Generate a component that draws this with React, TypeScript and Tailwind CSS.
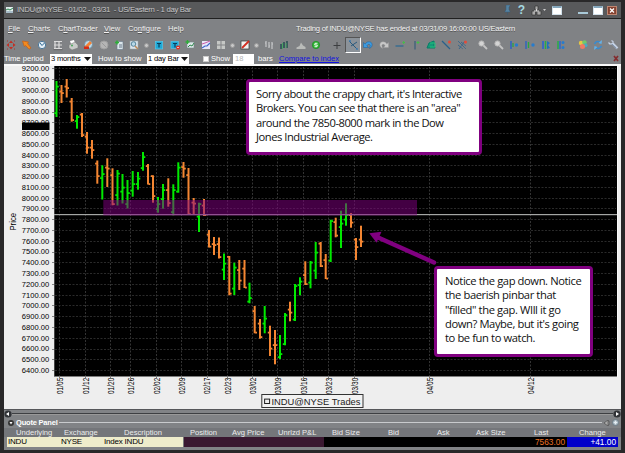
import React from 'react';

type Bar = [number, number, number, 'g' | 'o', number, number];

// x, high, low, colour, open, close
const BARS: Bar[] = [
  [56.5, 81, 117, 'g', 113, 86.5], [61.5, 85, 103, 'o', 91.5, 93], [66.7, 79, 97.5, 'o', 86.5, 88], [71.7, 98, 121.7, 'o', 101.5, 120],
  [77, 115, 128.7, 'g', 121, 117], [82, 113, 137, 'o', 114.5, 135], [87, 132, 153.7, 'o', 136.5, 147.5], [92, 140, 158.7, 'o', 147.5, 150],
  [97.3, 160.5, 183.7, 'o', 163.5, 176], [102.3, 165.3, 199.5, 'g', 178, 174], [107.3, 158.3, 187, 'o', 167.5, 168.5], [112.5, 168.3, 205.3, 'o', 175, 204],
  [117.5, 170, 205.5, 'g', 195, 173.5], [122.5, 174, 203.5, 'g', 191.5, 187.5], [127.5, 180, 208.5, 'g', 204, 193], [132.7, 171, 196.7, 'g', 190.5, 184],
  [138, 172, 189.7, 'g', 184, 178.5], [143, 152, 170.7, 'g', 168, 157], [148, 164, 184.5, 'o', 166, 184], [153, 175.3, 202.7, 'o', 176, 196],
  [158, 197, 212.7, 'g', 209, 204], [163, 184, 208.7, 'g', 199, 190], [168.3, 178.3, 206.7, 'o', 190, 203], [173.3, 184.3, 215.3, 'g', 212, 190],
  [178.3, 162.3, 192.7, 'g', 191.5, 167.5], [183.5, 162, 177.7, 'o', 167, 168.5], [188.5, 168, 215, 'o', 175, 214], [193.7, 198, 215, 'o', 202.5, 203.5],
  [199, 202.7, 232, 'g', 216.5, 204], [204, 199, 216, 'o', 205.5, 215], [209, 230, 247.5, 'o', 234.5, 246.5], [214, 237, 255, 'o', 244, 245],
  [219, 237.5, 258.5, 'o', 244, 257], [224, 253.5, 280, 'g', 269.5, 263.5], [229.3, 256, 295.3, 'o', 256.7, 293.5], [234.3, 262.7, 295, 'g', 288.5, 267.5],
  [239.3, 260, 290, 'o', 270, 280.5], [244.5, 260, 288, 'o', 268.5, 287.5], [249.5, 282.7, 303.3, 'g', 301.5, 298], [254.7, 306, 333.3, 'o', 311, 332.5],
  [260, 319, 338.7, 'o', 323.5, 337], [264.7, 306, 333.3, 'g', 323.5, 318.5], [270, 325.7, 356, 'o', 332.5, 348.5], [275, 330, 364.3, 'o', 345, 345],
  [280, 335, 359, 'g', 357, 354], [285, 313, 345.3, 'g', 344, 315], [290, 301.7, 321.3, 'o', 309.5, 312.5], [295, 284, 321, 'g', 319.5, 286],
  [300, 277.3, 295.3, 'g', 285, 281.5], [305.3, 261.3, 285, 'o', 275, 284], [310.5, 261, 288.3, 'g', 282.5, 262.5], [315.7, 242, 279, 'g', 270.5, 252.5],
  [320.7, 242, 267, 'o', 243.5, 266], [325.7, 254, 279, 'o', 260, 278.5], [330.7, 219.7, 262, 'g', 260.5, 221], [335.7, 217.7, 237.3, 'o', 222, 235.5],
  [341, 210.7, 248, 'g', 227, 223.5], [346, 203.3, 225.7, 'g', 219.5, 215], [351, 213, 227.7, 'o', 215, 222.5], [356, 238, 260, 'o', 239.5, 247],
  [361, 225.7, 247, 'o', 239.5, 241.5],
];

const DATES: [number, string][] = [
  [59.5, '01/05'], [85.5, '01/12'], [110.5, '01/20'], [130.5, '01/26'], [156.5, '02/02'], [181.5, '02/09'], [207, '02/17'], [227.5, '02/23'],
  [252.5, '03/02'], [277.5, '03/09'], [303.5, '03/16'], [328.5, '03/23'], [354.5, '03/30'], [429.5, '04/05'], [530.5, '04/12'],
];

const PRICES = Array.from({ length: 29 }, (_, i) => 9200 - i * 100);
const priceY = (p: number) => 68.4 + (9200 - p) * 0.10775;
const colors = { g: '#00ea00', o: '#f48632' };

function Chart() {
  return (
    <svg width="617" height="345" viewBox="4 64 617 345" className="block" fontFamily="'Liberation Sans', Arial, sans-serif">
      <rect x="4" y="64" width="617" height="345" fill="#eeeeee" />
      <rect x="4" y="64" width="617" height="2" fill="#f8f8f8" />
      <rect x="54" y="66" width="564" height="311" fill="#fafafa" />
      <rect x="54" y="66" width="563" height="310.5" fill="#000" />
      <rect x="54" y="66" width="1" height="310" fill="#444" />
      {PRICES.map((p) => (
        <g key={p}>
          <line x1="55" x2="616" y1={Math.round(priceY(p)) + 0.5} y2={Math.round(priceY(p)) + 0.5} stroke="#2a2a2a" strokeDasharray="2 1.5" />
          <line x1="52" x2="54" y1={Math.round(priceY(p)) + 0.5} y2={Math.round(priceY(p)) + 0.5} stroke="#888" />
          <text x="21.8" y={priceY(p) + 2.9} fontSize="7.6" textLength="27.4" lengthAdjust="spacingAndGlyphs" fill="#000">{p}.00</text>
        </g>
      ))}
      {DATES.map(([x, d]) => (
        <g key={d}>
          <line x1={Math.floor(x) + 0.5} x2={Math.floor(x) + 0.5} y1="67" y2="376" stroke="#333" strokeDasharray="2 1.5" />
          <line x1={Math.floor(x) + 0.5} x2={Math.floor(x) + 0.5} y1="376" y2="378" stroke="#777" />
          <text transform={`translate(${x + 3.2} 394) rotate(-90)`} fontSize="8.8" textLength="16.3" lengthAdjust="spacingAndGlyphs" fill="#000">{d}</text>
        </g>
      ))}
      <rect x="22" y="122.5" width="27.5" height="7.5" fill="#000" />
      <text transform="translate(16 230.5) rotate(-90)" fontSize="8.4" textLength="17.5" lengthAdjust="spacingAndGlyphs" fill="#000">Price</text>
      {BARS.map(([x, hi, lo, c, o, cl]) => (
        <g key={x} fill={colors[c]}>
          <rect x={x - 1} y={hi} width="2" height={lo - hi} />
          <rect x={x - 2.2} y={o - 0.8} width="1.8" height="1.8" />
          <rect x={x + 0.5} y={cl - 0.8} width="1.8" height="1.8" />
        </g>
      ))}
      <rect x="54" y="214" width="563" height="1.2" fill="#a4a6a4" />
      <rect x="103.3" y="200" width="313.7" height="15.5" fill="#800080" fillOpacity=".52" />
      <path d="M434 262.5 L377 237" stroke="#800080" strokeWidth="4.4" strokeLinecap="round" />
      <path d="M369.3 233.3 L381.5 231.8 L376.5 242.8 Z" fill="#800080" />
      <rect x="261.8" y="394.5" width="101.2" height="13" fill="#f2f2f2" stroke="#333" />
      <rect x="264.6" y="399.1" width="5" height="4.4" fill="#eee" stroke="#222" />
      <text x="271.5" y="404.6" fontSize="8.2" textLength="89" lengthAdjust="spacingAndGlyphs" fill="#222">INDU@NYSE Trades</text>
    </svg>
  );
}

const Svg = ({ children }: { children: React.ReactNode }) => (
  <svg width="14" height="14" viewBox="0 0 14 14" fill="none" className="block shrink-0">{children}</svg>
);
const Dot = () => (
  <span className="flex w-2 shrink-0 justify-center"><span className="size-[5px] rounded-full border border-[#9a9a9a] bg-[#c8c8c8]" /></span>
);

const Move = () => <Svg><path d="M7 2.5 9 5H5ZM7 11.5 9 9H5ZM2.5 7 5 5v4ZM11.500 7 9 5v4Z" fill="#c42d22" /><path d="M3 3h1M10 3h1M3 11h1M10 11h1" stroke="#a33" /><circle cx="7" cy="7" r="1" fill="#808285" /></Svg>;
const Arrow = () => <Svg><path d="M2.500 3 8.500 4 7.600 5.600 11 10 9 11.200 5.600 7.600 4.300 8.500Z" fill="#f28a20" stroke="#c95f12" strokeWidth=".7" /></Svg>;
const Clock = () => <Svg><circle cx="7" cy="7" r="3.700" fill="#e4eef5" stroke="#4a7799" /><path d="m5 5 2 2.500L9.500 5" stroke="#2a6490" /></Svg>;
const Grid = () => <Svg><path d="M3 3.500h8M3 7h8M3 10.500h8M4 3v8M8 3v8" stroke="#dcdcdc" strokeWidth="1.200" /><path d="M2.500 11.700h9" stroke="#555" strokeWidth=".6" /></Svg>;
const Print = () => <Svg><path d="m4 3 4-1 1 3-4 1Z" fill="#fff" /><path d="m3 7 6-3 3 3v3l-6 2-3-2Z" fill="#c8cbc8" stroke="#777" strokeWidth=".5" /><circle cx="6" cy="7.500" r="1" fill="#4aa55a" /></Svg>;
const Edit = () => <Svg><circle cx="7.500" cy="6.500" r="4" fill="#bcd8e8" stroke="#5b8499" strokeWidth=".7" /><path d="m4 8 5-5 2 2-5 5Z" fill="#f38234" /><path d="M3 8.500h5v2.500H3Z" fill="#d52b14" /></Svg>;
const Disk = () => <Svg><circle cx="7" cy="7" r="4" fill="#b5b5b5" stroke="#a0a0a0" /><path d="m5 5 4 4" stroke="#999" /></Svg>;
const AddPage = () => <Svg><path d="M5 3.500h6v8H5z" fill="#dce7ec" stroke="#678" strokeWidth=".6" /><path d="M3 4.500h4M5 2.500v4" stroke="#2daf38" strokeWidth="1.500" /><path d="M7 7h3M7 9h3" stroke="#678" /></Svg>;
const Search = () => <Svg><rect x="3" y="3" width="8" height="8" fill="#dbe5ec" stroke="#9aa" strokeWidth=".5" /><circle cx="6.500" cy="6" r="2.300" fill="#b8d9e8" stroke="#53849c" /><path d="m8 8 3 3" stroke="#bc8a58" strokeWidth="1.500" /></Svg>;
const TextIcon = () => <Svg><rect x="3.300" y="3.300" width="7.400" height="7.700" fill="#20a8d5" stroke="#57cced" strokeWidth=".6" /><path d="M5 5.500h4M7 5.500v4" stroke="#083e5c" strokeWidth="1.200" /></Svg>;
const TextDel = () => <Svg><rect x="3" y="3.300" width="7.400" height="7" fill="#20a8d5" stroke="#57cced" strokeWidth=".6" /><path d="M5 5.500h4M7 5.500v4" stroke="#083e5c" strokeWidth="1.200" /><circle cx="10" cy="9.500" r="2" fill="#e12c20" /><path d="M9 9.500h2" stroke="#fff" strokeWidth=".7" /></Svg>;
const ChartAdd = () => <Svg><path d="M4 4h7v6H4z" fill="#dde7ea" stroke="#788" strokeWidth=".6" /><path d="m5 9 2-2 2 1 2-3" stroke="#2d884a" /><path d="M2.500 4h4M4.500 2v4" stroke="#2daf38" strokeWidth="1.400" /></Svg>;
const Lines = () => <Svg><rect x="3" y="3" width="8" height="8" fill="#e8e8f8" /><path d="m3 6 3-1 5-2" stroke="#cc5da8" /><path d="m3 10 3-2 2 0 3-3" stroke="#4168cb" strokeWidth="1.200" /></Svg>;
const Tiles = () => <Svg><path d="M3 3h3.500v3.500H3zM7.500 3H11v3.500H7.500zM3 7.500h3.500V11H3zM7.500 7.500H11V11H7.500z" fill="#c5c7c5" /></Svg>;
const Draw = () => <Svg><rect x="3" y="3" width="8" height="8" fill="#f2f2ef" stroke="#333" strokeWidth=".7" /><path d="m4 10 7-7" stroke="#d22d20" strokeWidth="1.800" /></Svg>;
const Candles = () => <Svg><path d="M4 3v6M7 4v6M10 4v7M3 5h1M7 8h1M10 6h1" stroke="#c6c8ca" strokeWidth="1.200" /></Svg>;
const Volume = () => <Svg><path d="M4 6v5M7 4v6M10 3v7" stroke="#254b50" strokeWidth="1.500" /><path d="M5.500 5v6M9 5v5" stroke="#49a462" /></Svg>;
const Hill = () => <Svg><path d="M2.500 11V9.500L5.500 8 7 4.500 9 7.500 11.500 9v2Z" fill="#b9bbb9" /></Svg>;
const Dollar = () => <Svg><circle cx="7" cy="7" r="3.700" fill="#31b534" stroke="#188723" strokeWidth=".6" /><path d="M8.500 5.300H6L5.700 7H8.300L8 8.700H5.500" stroke="#fff" strokeWidth=".9" /></Svg>;
const Plus = () => <Svg><path d="M3.500 7.500h7M7 4v7" stroke="#3c3e41" /></Svg>;
const Trend = () => <span className="flex size-[16px] shrink-0 items-center justify-center border border-[#555] border-r-white border-b-white bg-[#8b9299]"><Svg><path d="m3 3 8 8M5 8l6-4" stroke="#295a7e" /><path d="M3 3h2M10 11h2" stroke="#407cae" strokeWidth="1.500" /></Svg></span>;
const Undo = () => <Svg><path d="M2.500 4.500v5h5L5.900 7.800C6.800 6 8.800 5.900 9.200 7.500L8.500 10.500C12.500 8.500 11.500 4 8.300 3.800 6.300 3.600 5 4.500 4.200 6.100Z" fill="#3d9be0" stroke="#185e9c" strokeWidth=".5" /></Svg>;
const Redo = () => <Svg><path d="M11.500 4.500v5h-5L8.100 7.800C7.200 6 5.200 5.900 4.800 7.500L5.500 10.500C1.500 8.500 2.500 4 5.700 3.800 7.700 3.600 9 4.500 9.800 6.100Z" fill="#c8c8c8" stroke="#999" strokeWidth=".4" /></Svg>;
const HLine = () => <Svg><path d="M2.500 8h8" stroke="#276993" strokeWidth="1.200" /><path d="M9.500 4.500h2.500M10.700 3v3" stroke="#45bd48" /></Svg>;
const VLine = () => <Svg><path d="M6 3v8.500" stroke="#285779" /><path d="M7.500 4.500h3M9 3v3" stroke="#45bd48" /></Svg>;
const Poly = () => <Svg><path d="m3 10 2-5 5-2v5l1 2Z" fill="#159a79" stroke="#087c67" /><path d="M6 5h5v4H6" stroke="#25c17d" /></Svg>;
const LineRed = () => <Svg><path d="m3 3 8 8" stroke="#28618b" strokeWidth="1.300" /><circle cx="10.500" cy="4" r="1.500" fill="#e44a38" /></Svg>;
const FanRed = () => <Svg><path d="m3 3 8 8M3 7l5 4M6 4l5 4M4 11 10 3" stroke="#28618b" strokeDasharray="1 .5" /><circle cx="10.500" cy="4" r="1.500" fill="#e44a38" /></Svg>;
const Zoom = () => <Svg><circle cx="5.500" cy="5.500" r="2.600" fill="#d4d4d4" stroke="#b8b8b8" /><path d="m7.500 7.500 3.500 3.500" stroke="#c4c4c4" strokeWidth="1.800" /></Svg>;
const Range = () => <Svg><path d="M4 3v8" stroke="#2562c6" strokeWidth="1.400" /><path d="M6 5v4" stroke="#27a742" strokeWidth="1.300" /><circle cx="9.500" cy="7" r="1.700" fill="#267ccd" /></Svg>;
const RangeGap = () => <Svg><path d="M3 3v8" stroke="#2562c6" strokeWidth="1.300" /><path d="M5.500 4v6" stroke="#27a742" strokeWidth="1.300" /><circle cx="10" cy="7" r="1.700" fill="#267ccd" /></Svg>;
const Expand = () => <Svg><path d="M4 3v8" stroke="#2b63d0" strokeWidth="1.600" /><path d="M6.500 3v8" stroke="#28ac48" strokeWidth="1.500" /><path d="m8 3 3 2-2 2 2 3-3 1Z" fill="#1f72bd" /></Svg>;
const Collapse = () => <Svg><path d="M4 3v8" stroke="#28ac48" strokeWidth="1.500" /><path d="M6 3v8" stroke="#2b63d0" strokeWidth="1.400" /><circle cx="9" cy="4.500" r="1.500" fill="#267ccd" /><circle cx="9" cy="9.500" r="1.500" fill="#267ccd" /></Svg>;
const Colors = () => <Svg><circle cx="5" cy="5" r="2.200" fill="#e6c743" /><circle cx="8.500" cy="4.500" r="2.200" fill="#70c96b" /><circle cx="9.500" cy="7.300" r="2" fill="#4baac0" /><circle cx="6.500" cy="8.500" r="2.500" fill="#ef7a64" /></Svg>;
const Refresh = () => <Svg><path d="M3.500 6C5 2.500 8 3 9.500 5M10.500 8C9 11.500 6 11 4.500 9" stroke="#368bd0" strokeWidth="1.600" /><path d="m11 2-.5 4L7.500 5ZM3 12l.5-4 3 1Z" fill="#64b2e9" /></Svg>;
const Wrench = () => <Svg><path d="M2.500 4.500 4 6 6 5.700 10.500 10.500 11.500 9.500 7 5 7 3.500 5.500 2.500" stroke="#c5d2e4" strokeWidth="1.200" /><path d="m6 6 4.500 4.500" stroke="#587193" strokeWidth=".6" /></Svg>;

const TOOLS: [React.ComponentType, string][] = [
  [Move, 'ml-0'], [Arrow, 'ml-[2px]'], [Clock, 'ml-px'], [Grid, 'ml-[2px]'], [Print, 'ml-px'], [Edit, 'ml-px'], [Disk, 'ml-[2px]'],
  [AddPage, 'ml-px'], [Search, 'ml-px'], [Dot, 'ml-px'], [TextIcon, 'ml-[2px]'], [TextDel, 'ml-[2px]'], [ChartAdd, 'ml-px'], [Lines, 'ml-[2px]'],
  [Tiles, 'ml-px'], [Dot, 'ml-0'], [Draw, 'ml-[2px]'], [Dot, 'ml-0'], [Candles, 'ml-[2px]'], [Volume, 'ml-px'], [Hill, 'ml-[3px]'],
  [Dollar, 'ml-px'], [Plus, 'ml-[7px]'], [Trend, 'ml-px'], [Undo, 'ml-0'], [Redo, 'ml-[2px]'], [HLine, 'ml-[2px]'], [VLine, 'ml-[2px]'],
  [Poly, 'ml-px'], [LineRed, 'ml-px'], [FanRed, 'ml-[2px]'], [Zoom, 'ml-[7px]'], [Zoom, 'ml-[2px]'], [Range, 'ml-px'], [RangeGap, 'ml-[2px]'],
  [Expand, 'ml-[2px]'], [Collapse, 'ml-px'], [Colors, 'ml-[8px]'], [Refresh, 'ml-px'], [Wrench, 'ml-px'],
];

function TitleBar() {
  return (
    <header className="flex h-[17px] shrink-0 items-center border-b border-[#202020] bg-[#58595b] text-[#c4c5c7]">
      <svg width="8" height="8" viewBox="0 0 8 8" className="ml-[2px] block shrink-0"><path d="M0 1h7v6H0z" fill="#e3eeee" /><path d="m0 4 2-1 2 1 3-2" fill="none" stroke="#308b54" /><path d="M0 6h7" stroke="#6c89a3" /></svg>
      <h1 className="ml-[3px] text-[7.800px] whitespace-pre tracking-[-0.32px] [text-shadow:0_1px_0_#333]">INDU@NYSE - 01/02 - 03/31  - US/Eastern - 1 day Bar</h1>
      <div className="ml-auto flex items-center">
        <svg width="7" height="10" viewBox="0 0 7 10" className="block"><path d="M2 0h4v1L5 2v3l1 1v1H1V6l1-1V2L2 1ZM3.500 7v3" fill="#5682a0" stroke="#345b78" strokeWidth=".5" /></svg>
        <b className="ml-[6px] w-[9px] text-center text-[12px] leading-none text-[#a6dae1]">?</b>
        <svg width="16" height="11" viewBox="0 0 16 11" className="ml-[5px] block"><path d="M4 1h3v4H4zM1 6h3.500v4H1zM6 6h4v4H6z" fill="#aaa" stroke="#333" strokeWidth=".7" /><path d="M5.500 4v2M3 6h5" stroke="#ddd" /><path d="M12 4h3l-1.500 2Z" fill="#ccc" /></svg>
        <span className="ml-[5px] h-[9px] w-[10px] border border-[#d2e0ea] border-t-2 border-t-[#86a8bd] bg-white" />
        <span className="mt-[5px] ml-[16px] h-[2px] w-[10px] bg-[#a9c9d8]" />
        <span className="ml-[5px] h-[9px] w-[10px] border border-[#d2e0ea] border-t-2 border-t-[#86a8bd] bg-white" />
        <svg width="10" height="9" viewBox="0 0 10 9" className="mr-[4px] ml-[4px] block"><rect x=".5" y=".5" width="9" height="8" fill="#85412f" stroke="#bd8672" /><path d="m3 2.500 4 4m0-4-4 4" stroke="#fff" strokeWidth="1.300" /></svg>
      </div>
    </header>
  );
}

function MenuBar() {
  return (
    <nav className="flex h-[18px] shrink-0 items-center pt-px pl-[4px] text-[7.600px] whitespace-nowrap text-[#f4f4f4] [text-shadow:0_1px_0_#555]">
      <span className="w-[20px]"><u>F</u>ile</span>
      <span className="w-[30px]"><u>C</u>harts</span>
      <span className="w-[46px] tracking-[-0.1px]">C<u>h</u>artTrader</span>
      <span className="w-[24px]"><u>V</u>iew</span>
      <span className="w-[40px]">Co<u>n</u>figure</span>
      <span className="w-[128px]">Help</span>
      <span className="tracking-[-0.23px]">Trading of INDU@NYSE has ended at 03/31/09 16:00:00 US/Eastern</span>
    </nav>
  );
}

const Select = ({ label }: { label: string }) => (
  <span className="flex h-[10px] w-[42px] shrink-0 items-center justify-between bg-white pr-px pl-px text-black">
    <span className="tracking-tight">{label}</span>
    <svg width="7" height="4" viewBox="0 0 7 4"><path d="M0 0h7L3.500 4Z" fill="#111" /></svg>
  </span>
);

function Options() {
  return (
    <div className="flex h-[11px] shrink-0 items-center text-[7.600px] whitespace-nowrap text-white">
      <span className="w-[46px]">Time period</span>
      <Select label="3 months" />
      <span className="ml-[6px] w-[49px]">How to show</span>
      <Select label="1 day Bar" />
      <span className="ml-[14px] size-[6px] border border-[#ccc] bg-white" />
      <span className="ml-[2px] w-[22px]">Show</span>
      <span className="h-[10px] w-[21px] bg-white pl-[2px] leading-[10px] text-[#b5b5b5]">18</span>
      <span className="ml-[4px] w-[21px]">bars</span>
      <a className="text-[#1010e0] underline">Compare to index</a>
      <svg width="6" height="7" viewBox="0 0 6 7" className="mr-[2px] ml-auto block"><path d="m1 1 4 5m0-5L1 6" stroke="#842b2d" strokeWidth="1.700" /></svg>
    </div>
  );
}

function QuotePanel() {
  return (
    <section className="flex h-[41px] shrink-0 flex-col bg-[#818386] text-[8px] whitespace-nowrap">
      <div className="flex h-[8px] items-center border-t border-[#55575a]">
        <svg width="8" height="8" viewBox="0 0 8 8" className="block shrink-0"><circle cx="4" cy="4" r="3.600" fill="#303236" /><path d="m2 4 3-2v4Z" fill="#fff" /></svg>
        <span className="h-[2px] grow border-b border-[#999] bg-[#3d3f42]" />
        <svg width="8" height="8" viewBox="0 0 8 8" className="block shrink-0"><circle cx="4" cy="4" r="3.600" fill="#303236" /><path d="M6 4 3 2v4Z" fill="#fff" /></svg>
      </div>
      <div className="flex h-[11px] items-center pr-[2px] pl-[4px]">
        <svg width="6" height="6" viewBox="0 0 6 6" className="block"><circle cx="3" cy="3" r="3" fill="#333" /><path d="M1.500 2h3L3 4.500Z" fill="#fff" /></svg>
        <b className="ml-[2px] w-[43px] text-[7.500px] leading-none tracking-[-0.2px] text-white">Quote Panel</b>
        <span className="h-px grow bg-[#c9cbcd]" />
        <svg width="7" height="6" viewBox="0 0 7 6" className="ml-px block"><path d="m1 3 4-3v6ZM5 1h1v4H5" fill="#aaa" stroke="#444" strokeWidth=".6" /></svg>
        <svg width="7" height="7" viewBox="0 0 7 7" className="ml-[2px] block"><circle cx="3.500" cy="3.500" r="3" fill="#b6c4cc" stroke="#6a7a85" /><path d="M2 3.500h3M3.500 2v3" stroke="#e5edf2" /></svg>
      </div>
      <div className="flex h-[9px] items-center bg-[#74767a] pl-[12px] text-[7.600px] leading-none text-[#eceded]">
        <span className="w-[48px]">Underlying</span>
        <span className="w-[60px]">Exchange</span>
        <span className="w-[66px]">Description</span>
        <span className="w-[42px]">Position</span>
        <span className="w-[46px]">Avg Price</span>
        <span className="w-[54px]">Unrlzd P&amp;L</span>
        <span className="w-[56px]">Bid Size</span>
        <span className="w-[49px]">Bid</span>
        <span className="w-[39px]">Ask</span>
        <span className="w-[58px]">Ask Size</span>
        <span className="w-[45px]">Last</span>
        <span>Change</span>
      </div>
      <div className="mr-[3px] ml-[3px] flex h-[10px] items-center leading-[10px]">
        <div className="flex h-full w-[176px] bg-[#eeeccb] pl-px text-[8px] tracking-[-0.2px] text-black">
          <span className="w-[53px]">INDU</span>
          <span className="w-[43px]">NYSE</span>
          <span>Index INDU</span>
        </div>
        <div className="h-full w-px bg-[#777]" />
        <div className="h-full w-[140px] bg-[#3a1830]" />
        <div className="h-full grow bg-black pr-[2px] text-right text-[8.300px] text-[#ed7424]">7563.00</div>
        <div className="h-full w-[51px] bg-[#0000ca] pr-[2px] text-right text-[8.300px] text-white">+41.00</div>
      </div>
    </section>
  );
}

export default function App() {
  return (
    <main className="relative flex h-[453px] w-[625px] flex-col overflow-hidden bg-[#292829] pt-[2px] pr-[4px] pl-[4px] font-['Liberation_Sans',Arial,sans-serif]">
      <TitleBar />
      <div className="flex h-[45px] shrink-0 flex-col bg-[#808285]">
        <MenuBar />
        <div className="flex h-[16px] shrink-0 items-center">
          {TOOLS.map(([Icon, gap], i) => <span key={i} className={gap}><Icon /></span>)}
        </div>
        <Options />
      </div>
      <Chart />
      <QuotePanel />
      <p className="absolute top-[79px] left-[246px] h-[76px] w-[236px] rounded-[4px] border-[3px] border-[#800080] bg-white pt-[5px] pl-[7px] font-['Open_Sans','Noto_Sans',sans-serif] text-[11.200px] leading-[14.300px] tracking-[-0.48px] whitespace-nowrap text-[#111]">
        Sorry about the crappy chart, it's Interactive<br />Brokers. You can see that there is an "area"<br />around the 7850-8000 mark in the Dow<br />Jones Industrial Average.
      </p>
      <p className="absolute top-[266px] left-[434px] h-[91px] w-[159px] rounded-[4px] border-[3px] border-[#800080] bg-white pt-[5px] pl-[8px] font-['Open_Sans','Noto_Sans',sans-serif] text-[11.200px] leading-[14.300px] tracking-[-0.4px] whitespace-nowrap text-[#111]">
        Notice the gap down. Notice<br />the baerish pinbar that<br />"filled" the gap. WIll it go<br />down? Maybe, but it's going<br />to be fun to watch.
      </p>
    </main>
  );
}
